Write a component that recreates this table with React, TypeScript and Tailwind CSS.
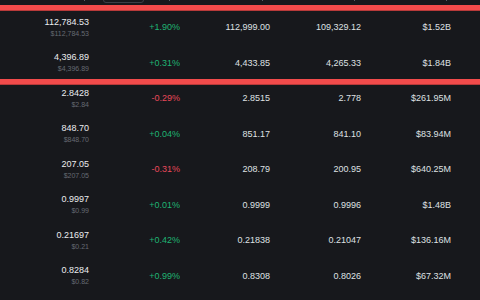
import React from "react";

type Row = [string, string, string, string, string, string];

const rows: Row[] = [
  ["112,784.53", "$112,784.53", "+1.90%", "112,999.00", "109,329.12", "$1.52B"],
  ["4,396.89", "$4,396.89", "+0.31%", "4,433.85", "4,265.33", "$1.84B"],
  ["2.8428", "$2.84", "-0.29%", "2.8515", "2.778", "$261.95M"],
  ["848.70", "$848.70", "+0.04%", "851.17", "841.10", "$83.94M"],
  ["207.05", "$207.05", "-0.31%", "208.79", "200.95", "$640.25M"],
  ["0.9997", "$0.99", "+0.01%", "0.9999", "0.9996", "$1.48B"],
  ["0.21697", "$0.21", "+0.42%", "0.21838", "0.21047", "$136.16M"],
  ["0.8284", "$0.82", "+0.99%", "0.8308", "0.8026", "$67.32M"],
];

export default function App() {
  return (
    <div className="relative w-[480px] h-[300px] overflow-hidden bg-[#17181c] font-['Liberation_Sans',Arial,sans-serif] text-[#e6e7ea]">
      {/* header remnant */}
      <div className="relative h-[9.5px] grid grid-cols-[89px_91px_90px_91px_90px]">
        <div className="flex justify-end pr-[4px]">
          <span className="w-[1px] h-[1px] bg-[#5a5d66]" />
        </div>
        <div className="relative flex justify-end pr-[10px]">
          <span className="w-[1px] h-[1px] bg-[#5a5d66]" />
          <div className="absolute left-[14px] top-[-10px] w-[41px] h-[13px] rounded-[3px] border border-[#3b3e46]" />
        </div>
        <div className="flex justify-end pr-[7px]">
          <span className="w-[1px] h-[1px] bg-[#5a5d66]" />
        </div>
        <div className="flex justify-end pr-[6px]">
          <span className="w-[1px] h-[1px] bg-[#5a5d66]" />
        </div>
        <div className="flex justify-end pr-[4px]">
          <span className="w-[1px] h-[1px] bg-[#5a5d66]" />
        </div>
      </div>

      {rows.map((r, i) => {
        const up = r[2].startsWith("+");
        return (
          <div
            key={i}
            className="h-[35.5px] grid grid-cols-[89px_91px_90px_91px_90px] items-center text-[9px]"
          >
            <div className="flex flex-col items-end">
              <span className="leading-[12px] text-[#ebecef]">{r[0]}</span>
              <span className="leading-[11px] text-[7px] text-[#666a73]">{r[1]}</span>
            </div>
            <div className={`text-right leading-[12px] ${up ? "text-[#1fb473]" : "text-[#e8485a]"}`}>
              {r[2]}
            </div>
            <div className="text-right leading-[12px] text-[#dfe0e3]">{r[3]}</div>
            <div className="text-right leading-[12px] text-[#dfe0e3]">{r[4]}</div>
            <div className="text-right leading-[12px] text-[#dfe0e3]">{r[5]}</div>
          </div>
        );
      })}

      {/* drop indicator lines */}
      <div className="absolute left-0 right-0 top-[5px] h-[6px] bg-[#f24b4b] border-b border-[#b83a3a]" />
      <div className="absolute left-0 right-0 top-[79px] h-[6px] bg-[#f24b4b] border-b border-[#b83a3a]" />
    </div>
  );
}
